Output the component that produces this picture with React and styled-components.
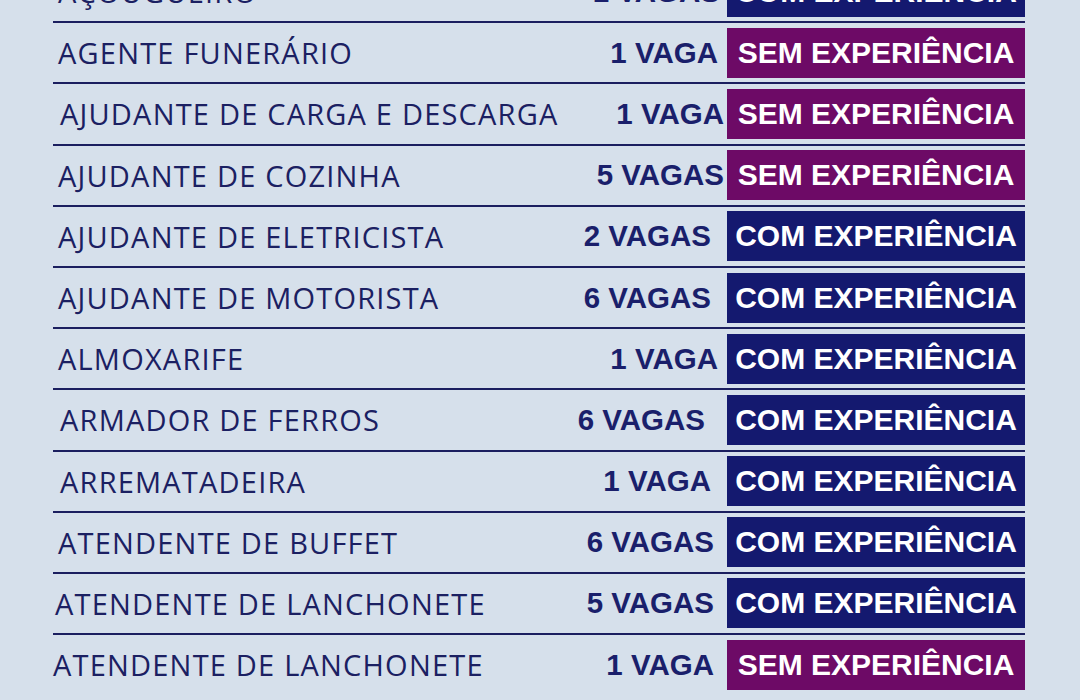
import React from "react";
import styled, { createGlobalStyle } from "styled-components";

const Global = createGlobalStyle`
  html, body {
    margin: 0;
    padding: 0;
    background: #d6e0eb;
    overflow: hidden;
  }
`;

const Page = styled.div`
  width: 1080px;
  height: 700px;
  background: #d6e0eb;
  overflow: hidden;
`;

const List = styled.div`
  display: flex;
  flex-direction: column;
  width: 972px;
  margin: -38px 0 0 53px;
`;

const Row = styled.div`
  display: flex;
  align-items: center;
  height: 59.2px;
  border-bottom: 2px solid ${(p) => (p.$last ? "transparent" : "#1b1f5f")};
`;

const Name = styled.div`
  flex: 1;
  padding-left: ${(p) => p.$indent}px;
  font-family: "Open Sans", "Liberation Sans", sans-serif;
  font-weight: 400;
  font-size: 29px;
  letter-spacing: 1.2px;
  color: #1b2062;
  white-space: nowrap;
`;

const Count = styled.div`
  margin-right: ${(p) => p.$gap}px;
  font-family: "Liberation Sans", Arial, sans-serif;
  font-weight: 700;
  font-size: 29.5px;
  color: #1a1f6b;
  white-space: nowrap;
`;

const Badge = styled.div`
  display: flex;
  align-items: center;
  justify-content: center;
  width: 298px;
  height: 50px;
  background: ${(p) => (p.$kind === "sem" ? "#6d0a66" : "#14196f")};
  color: #ffffff;
  font-family: "Liberation Sans", Arial, sans-serif;
  font-weight: 700;
  font-size: 30px;
  white-space: nowrap;
`;

const rows = [
  { name: "AÇOUGUEIRO", count: "1 VAGAS", kind: "com", indent: 5, gap: 7 },
  { name: "AGENTE FUNERÁRIO", count: "1 VAGA", kind: "sem", indent: 5, gap: 9 },
  { name: "AJUDANTE DE CARGA E DESCARGA", count: "1 VAGA", kind: "sem", indent: 7, gap: 3 },
  { name: "AJUDANTE DE COZINHA", count: "5 VAGAS", kind: "sem", indent: 5, gap: 3 },
  { name: "AJUDANTE DE ELETRICISTA", count: "2 VAGAS", kind: "com", indent: 5, gap: 16 },
  { name: "AJUDANTE DE MOTORISTA", count: "6 VAGAS", kind: "com", indent: 5, gap: 16 },
  { name: "ALMOXARIFE", count: "1 VAGA", kind: "com", indent: 5, gap: 9 },
  { name: "ARMADOR DE FERROS", count: "6 VAGAS", kind: "com", indent: 7, gap: 22 },
  { name: "ARREMATADEIRA", count: "1 VAGA", kind: "com", indent: 7, gap: 16 },
  { name: "ATENDENTE DE BUFFET", count: "6 VAGAS", kind: "com", indent: 5, gap: 13 },
  { name: "ATENDENTE DE LANCHONETE", count: "5 VAGAS", kind: "com", indent: 2, gap: 13 },
  { name: "ATENDENTE DE LANCHONETE", count: "1 VAGA", kind: "sem", indent: 0, gap: 13 },
];

export default function App() {
  return (
    <Page>
      <Global />
      <List>
        {rows.map((r, i) => (
          <Row key={i} $last={i === rows.length - 1}>
            <Name $indent={r.indent}>{r.name}</Name>
            <Count $gap={r.gap}>{r.count}</Count>
            <Badge $kind={r.kind}>
              {r.kind === "sem" ? "SEM EXPERIÊNCIA" : "COM EXPERIÊNCIA"}
            </Badge>
          </Row>
        ))}
      </List>
    </Page>
  );
}
